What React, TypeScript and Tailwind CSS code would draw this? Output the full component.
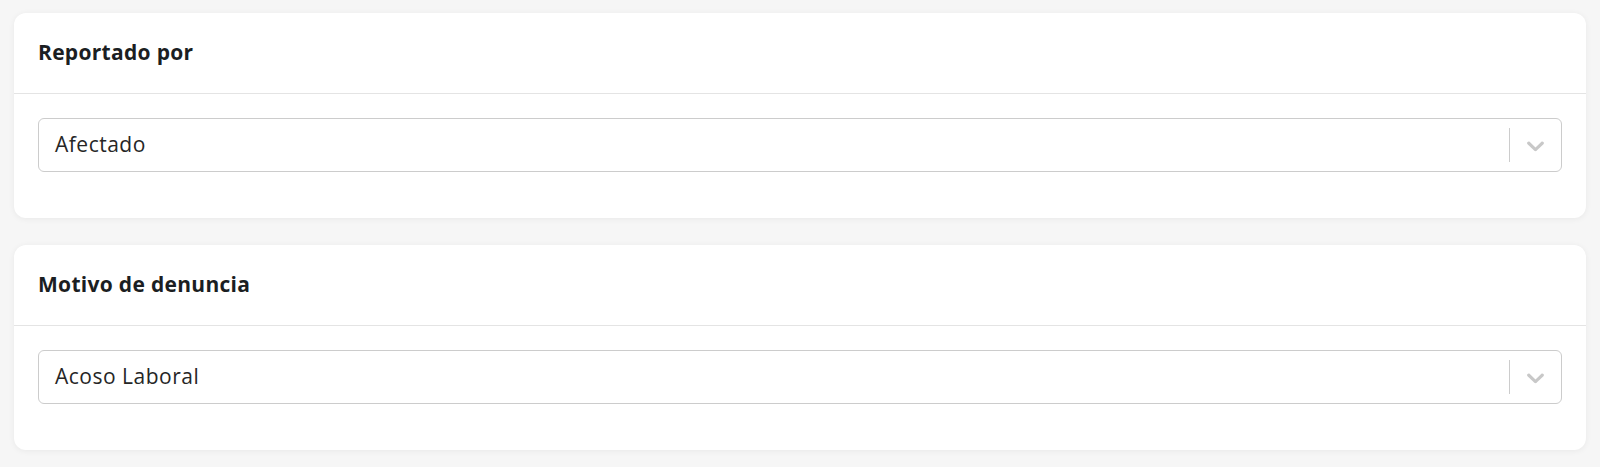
import React from "react";

interface SelectCardProps {
  title: string;
  value: string;
}

const ChevronDown = () => (
  <svg viewBox="0 0 20 20" className="h-[29px] w-[29px] fill-[#c8c8c8]" aria-hidden="true">
    <path d="M4.516 7.548c0.436-0.446 1.043-0.481 1.576 0l3.908 3.747 3.908-3.747c0.533-0.481 1.141-0.446 1.574 0 0.436 0.445 0.408 1.197 0 1.615-0.406 0.418-4.695 4.502-4.695 4.502-0.217 0.223-0.502 0.335-0.787 0.335s-0.57-0.112-0.789-0.335c0 0-4.287-4.084-4.695-4.502s-0.436-1.17 0-1.615z" />
  </svg>
);

const SelectCard = ({ title, value }: SelectCardProps) => {
  return (
    <div className="rounded-[12px] bg-white shadow-[0_1px_6px_rgba(0,0,0,0.06)]">
      <div className="flex h-[81px] items-center border-b border-[#e4e4e4] px-[24px]">
        <h2 className="text-[21px] font-bold tracking-[0.3px] text-[#1b1e22]">{title}</h2>
      </div>
      <div className="px-[24px] pt-[24px] pb-[46px]">
        <div className="flex h-[54px] items-center rounded-[6px] border border-[#cccccc] bg-white">
          <div className="flex-1 pl-[16px] text-[21px] tracking-[0.5px] text-[#262626]">{value}</div>
          <div className="flex items-center">
            <span className="h-[34px] w-px bg-[#cccccc]" />
            <div className="pl-[11px] pr-[11px]">
              <ChevronDown />
            </div>
          </div>
        </div>
      </div>
    </div>
  );
};

export default function App() {
  return (
    <div
      className="min-h-screen bg-[#f6f6f6] px-[14px] pt-[13px] pb-[15px]"
      style={{ fontFamily: '"Open Sans", "Noto Sans", sans-serif' }}
    >
      <div className="flex flex-col gap-[27px]">
        <SelectCard title="Reportado por" value="Afectado" />
        <SelectCard title="Motivo de denuncia" value="Acoso Laboral" />
      </div>
    </div>
  );
}
